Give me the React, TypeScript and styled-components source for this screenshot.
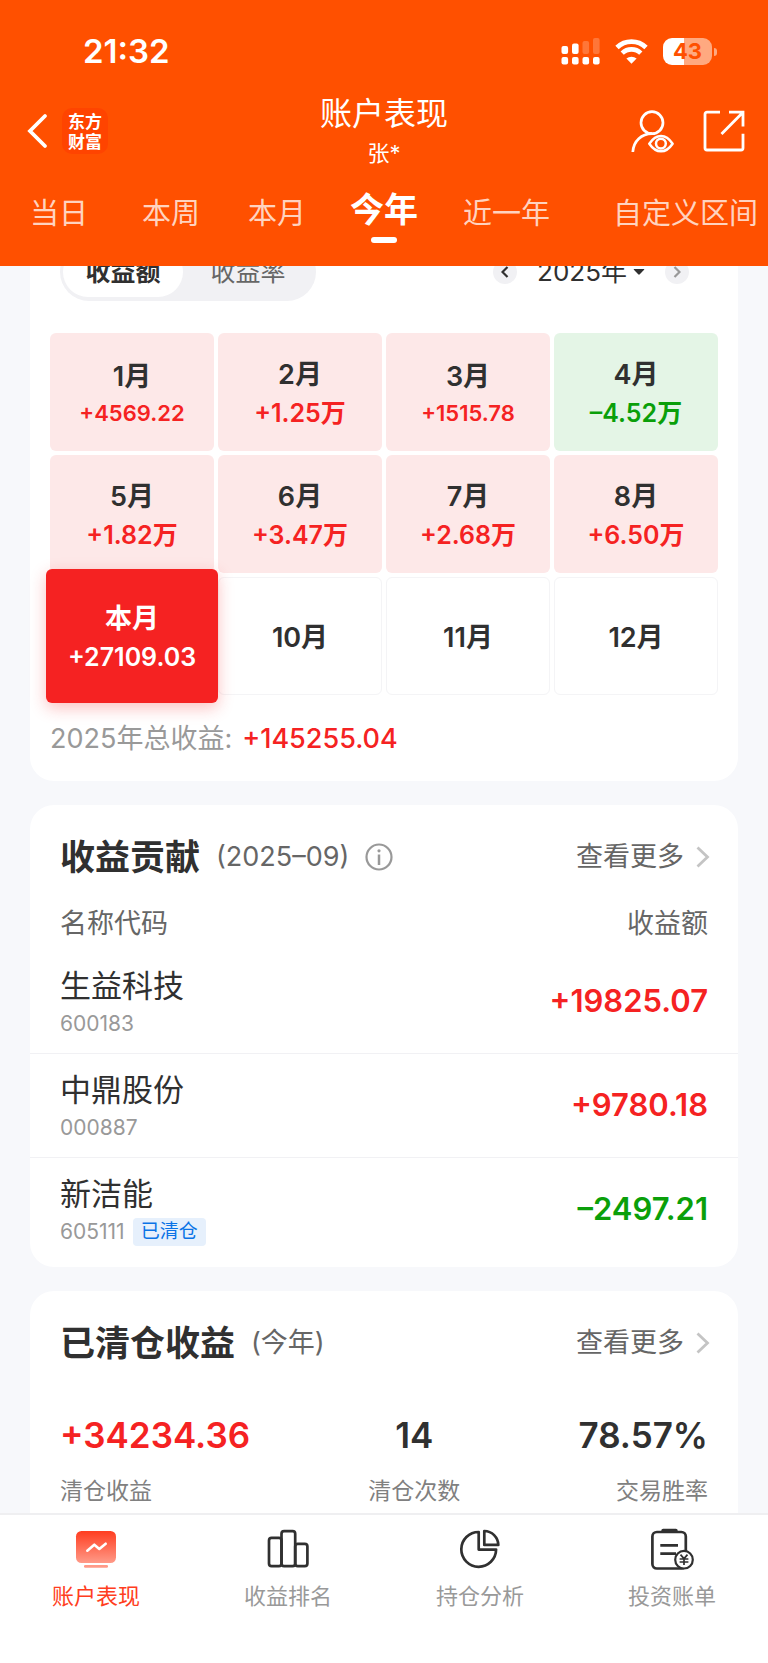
import React, { useLayoutEffect, useRef } from "react";
import styled, { createGlobalStyle, css } from "styled-components";

const GlobalStyle = createGlobalStyle`
  *, *::before, *::after { box-sizing: border-box; }
  body {
    margin: 0;
    background: #f7f8fb;
    color: #303030;
    font-family: Inter, "Noto Sans CJK SC", sans-serif;
    font-weight: 400;
  }
  button {
    padding: 0;
    border: 0;
    background: none;
    color: inherit;
    font: inherit;
    cursor: pointer;
  }
  a { color: inherit; text-decoration: none; }
  h1, h2, p, dl, dd { margin: 0; }
  svg { display: block; flex: none; }
`;

const palette = {
  brand: "#ff5000",
  up: "#f52222",
  down: "#0a9f0a",
  ink: "#303030",
  mid: "#666666",
  soft: "#999999",
};

type Trend = "up" | "down" | "none";
const trendColor = (t: Trend) =>
  t === "up" ? palette.up : t === "down" ? palette.down : palette.ink;

const Screen = styled.div`
  display: flex;
  flex-direction: column;
  height: 100vh;
`;

/* ---------- header ---------- */

const Header = styled.header`
  flex: none;
  background: ${palette.brand};
  color: #fff;
`;

const StatusBar = styled.div`
  display: flex;
  align-items: center;
  justify-content: space-between;
  padding: 31px 56px 23px 83px;
`;

const Clock = styled.span`
  font-size: 33px;
  line-height: 40px;
  font-weight: 600;
`;

const StatusIcons = styled.div`
  display: flex;
  align-items: center;
  gap: 15px;
`;

const Battery = styled.div`
  position: relative;
  width: 49px;
  height: 27px;
  border-radius: 9px;
  background: linear-gradient(90deg, #fff 43%, #ffa980 43%);
  color: ${palette.brand};
  font-size: 22px;
  line-height: 27px;
  font-weight: 700;
  text-align: center;

  &::after {
    content: "";
    position: absolute;
    right: -5px;
    top: 10px;
    width: 3px;
    height: 8px;
    border-radius: 0 3px 3px 0;
    background: #ffa980;
  }
`;

const TitleBar = styled.div`
  display: grid;
  grid-template-columns: 1fr auto 1fr;
  align-items: center;
  padding: 0 22px;
`;

const BrandGroup = styled.div`
  display: flex;
  align-items: center;
  gap: 14px;
  padding: 0 0 4px 4px;
`;

const Logo = styled.span`
  display: flex;
  align-items: center;
  justify-content: center;
  width: 46px;
  height: 46px;
  border-radius: 10px;
  background: #ff4400;
  font-family: "Noto Sans CJK SC", sans-serif;
  font-size: 17px;
  line-height: 20px;
  font-weight: 700;
  text-align: center;
`;

const TitleBlock = styled.div`
  text-align: center;
`;

const Title = styled.h1`
  font-size: 32px;
  line-height: 40px;
  font-weight: 400;
`;

const Subtitle = styled.p`
  font-size: 22px;
  line-height: 38px;
`;

const HeaderActions = styled.div`
  display: flex;
  justify-content: flex-end;
  gap: 28px;
  padding-bottom: 4px;
`;

const Tabs = styled.nav`
  display: grid;
  grid-template-columns: 118fr 106fr 106fr 108fr 137fr 183fr;
  align-items: start;
  height: 94px;
  padding: 14px 10px 0 0;
`;

const Tab = styled.button<{ $active?: boolean }>`
  display: flex;
  flex-direction: column;
  align-items: center;
  padding-top: 4px;
  font-size: 29px;
  line-height: 48px;
  font-weight: 400;
  color: rgba(255, 255, 255, 0.76);
  white-space: nowrap;

  &:last-child {
    justify-self: end;
  }

  ${(p) =>
    p.$active &&
    css`
      padding-top: 0;
      font-size: 34px;
      font-weight: 700;
      color: #fff;

      &::after {
        content: "";
        width: 26px;
        height: 6px;
        margin-top: 3px;
        border-radius: 3px;
        background: #fff;
      }
    `}
`;

/* ---------- content ---------- */

const Scroller = styled.main`
  flex: 1;
  min-height: 0;
  overflow-y: auto;
  scrollbar-width: none;
`;

const CardStack = styled.div`
  display: flex;
  flex-direction: column;
  gap: 24px;
  padding: 0 30px 24px;
`;

const Card = styled.section`
  border-radius: 24px;
  background: #fff;
`;

const CalendarToolbar = styled.div`
  display: flex;
  align-items: center;
  justify-content: space-between;
  padding: 24px 49px 32px 30px;
`;

const Segmented = styled.div`
  display: flex;
  height: 58px;
  padding: 4px 3px;
  border-radius: 29px;
  background: #f1f1f4;
`;

const Segment = styled.button<{ $active?: boolean }>`
  width: ${(p) => (p.$active ? 120 : 130)}px;
  border-radius: 25px;
  background: ${(p) => (p.$active ? "#fff" : "transparent")};
  color: ${(p) => (p.$active ? palette.ink : palette.mid)};
  font-size: 25px;
  line-height: 50px;
  font-weight: ${(p) => (p.$active ? 600 : 400)};
`;

const YearPicker = styled.div`
  display: flex;
  align-items: center;
  gap: 20px;
`;

const RoundButton = styled.button`
  display: flex;
  align-items: center;
  justify-content: center;
  width: 24px;
  height: 24px;
  border-radius: 50%;
  background: #f1f1f4;
`;

const YearButton = styled.button`
  display: flex;
  align-items: center;
  gap: 6px;
  font-size: 26px;
  line-height: 40px;
`;

const MonthGrid = styled.div`
  display: grid;
  grid-template-columns: repeat(4, 1fr);
  grid-auto-rows: 118px;
  gap: 4px;
  padding: 0 20px;
`;

type CellTone = Trend | "current";

const cellTone = {
  up: css`
    background: #fde8e8;
  `,
  down: css`
    background: #e4f5e6;
  `,
  none: css`
    border: 1px solid #f4f4f6;
  `,
  current: css`
    z-index: 1;
    margin: -8px -4px;
    background: ${palette.up};
    color: #fff;
    box-shadow: 0 5px 16px rgba(245, 34, 34, 0.28);
  `,
};

const MonthCell = styled.button<{ $tone: CellTone }>`
  display: flex;
  flex-direction: column;
  align-items: center;
  justify-content: center;
  padding-top: 3px;
  border-radius: 6px;
  ${(p) => cellTone[p.$tone]}
`;

const MonthName = styled.span`
  font-size: 27px;
  line-height: 38px;
  font-weight: 600;
`;

const MonthValue = styled.span<{ $tone: CellTone; $small?: boolean }>`
  font-size: ${(p) => (p.$small ? 22 : 25)}px;
  line-height: ${(p) => (p.$small ? 34 : 38)}px;
  font-weight: 600;
  color: ${(p) => (p.$tone === "current" ? "#fff" : trendColor(p.$tone))};
`;

const YearTotal = styled.p`
  padding: 24px 20px 22px;
  font-size: 27px;
  line-height: 40px;
  color: ${palette.soft};

  strong {
    margin-left: 10px;
    font-weight: 500;
    color: ${palette.up};
  }
`;

const CardHead = styled.div`
  display: flex;
  align-items: center;
  padding: 28px 28px 0 30px;
  line-height: 48px;
`;

const CardTitle = styled.h2`
  font-size: 35px;
  font-weight: 700;
`;

const CardNote = styled.span`
  margin: 0 16px;
  font-size: 27px;
  color: ${palette.mid};
`;

const MoreLink = styled.a`
  display: flex;
  align-items: center;
  gap: 12px;
  margin-left: auto;
  font-size: 27px;
  color: ${palette.mid};
`;

const HoldingTable = styled.table`
  width: 100%;
  margin-top: 18px;
  border-collapse: collapse;

  th {
    padding: 0 30px;
    font-size: 27px;
    line-height: 50px;
    font-weight: 400;
    text-align: left;
    color: ${palette.mid};
  }

  td {
    height: 104px;
    padding: 0 30px;
  }

  th:last-child,
  td:last-child {
    text-align: right;
  }

  tbody tr + tr td {
    border-top: 1px solid #f1f1f4;
  }
`;

const TableCard = styled(Card)`
  padding-bottom: 6px;
`;

const StockName = styled.div`
  padding-top: 8px;
  font-size: 31px;
  line-height: 38px;
`;

const StockCode = styled.div`
  display: flex;
  align-items: center;
  gap: 8px;
  font-size: 21px;
  line-height: 38px;
  color: ${palette.soft};
`;

const ClosedTag = styled.span`
  padding: 0 8px;
  border-radius: 4px;
  background: #e6f0fc;
  font-size: 19px;
  line-height: 28px;
  color: #0a73e6;
`;

const Amount = styled.span<{ $trend: Trend }>`
  font-size: 31px;
  line-height: 38px;
  font-weight: 600;
  color: ${(p) => trendColor(p.$trend)};
`;

const Stats = styled.dl`
  display: flex;
  justify-content: space-between;
  padding: 44px 30px 30px;
`;

const Stat = styled.div<{ $align: "flex-start" | "center" | "flex-end" }>`
  display: flex;
  flex-direction: column-reverse;
  align-items: ${(p) => p.$align};
  gap: 13px;
`;

const StatLabel = styled.dt`
  font-size: 23px;
  line-height: 38px;
  color: #808080;
`;

const StatValue = styled.dd<{ $trend: Trend }>`
  font-size: 35px;
  line-height: 48px;
  font-weight: 600;
  color: ${(p) => trendColor(p.$trend)};
`;

/* ---------- bottom navigation ---------- */

const BottomNav = styled.nav`
  flex: none;
  display: grid;
  grid-template-columns: repeat(4, 1fr);
  padding: 13px 0 51px;
  border-top: 2px solid #efeff1;
  background: #fff;
`;

const NavItem = styled.a<{ $active?: boolean }>`
  display: flex;
  flex-direction: column;
  align-items: center;
  gap: 8px;
  font-size: 22px;
  line-height: 32px;
  color: ${(p) => (p.$active ? "#ff3d20" : palette.soft)};
`;

/* ---------- icons ---------- */

const SignalIcon = () => (
  <svg width="39" height="28" viewBox="0 0 39 28" fill="#fff" aria-hidden="true">
    <rect x="0.5" y="9" width="6.6" height="8" rx="2" />
    <rect x="11" y="6.5" width="6.6" height="10.5" rx="2" />
    <rect x="21.5" y="4" width="6.6" height="13" rx="2" opacity="0.22" />
    <rect x="32" y="1" width="6.6" height="16" rx="2" opacity="0.22" />
    <rect x="0.5" y="20" width="6.6" height="7.6" rx="2" />
    <rect x="11" y="20" width="6.6" height="7.6" rx="2" />
    <rect x="21.5" y="20" width="6.6" height="7.6" rx="2" />
    <rect x="32" y="20" width="6.6" height="7.6" rx="2" />
  </svg>
);

const WifiIcon = () => (
  <svg width="33" height="25" viewBox="0 0 33 25" fill="none" aria-hidden="true">
    <path d="M2 8.4a21 21 0 0 1 29 0" stroke="#fff" strokeWidth="4.8" />
    <path d="M7.2 14.2a13.3 13.3 0 0 1 18.6 0" stroke="#fff" strokeWidth="4.6" />
    <path d="M11.4 19.6a7.6 7.6 0 0 1 10.2 0l-5.100 5.200z" fill="#fff" />
  </svg>
);

const BackIcon = () => (
  <svg width="22" height="36" viewBox="0 0 22 36" fill="none" aria-hidden="true">
    <path d="M19 3 4 18l15 15" stroke="#fff" strokeWidth="3.8" strokeLinecap="round" />
  </svg>
);

const ViewerIcon = () => (
  <svg width="44" height="44" viewBox="0 0 44 44" fill="none" stroke="#fff" strokeWidth="2.7" aria-hidden="true">
    <circle cx="22" cy="13.7" r="11" />
    <path d="M2.8 43C3.5 32 11.5 24.8 22 24.7" />
    <path d="M19.300 34.700Q24.500 27 31 27t11.600 7.700Q37.500 42.300 31 42.300t-11.700-7.600Z" strokeWidth="2.5" strokeLinejoin="round" />
    <circle cx="30.900" cy="34.600" r="4.900" strokeWidth="2.5" />
  </svg>
);

const ShareIcon = () => (
  <svg width="44" height="44" viewBox="0 0 44 44" fill="none" stroke="#fff" strokeWidth="2.8" aria-hidden="true">
    <path d="M18 3.200H5a2 2 0 0 0-2 2V39a2 2 0 0 0 2 2h34a2 2 0 0 0 2-2V24.800" />
    <path d="M27 3.200h14v14.200M41 3.200 19.500 25" />
  </svg>
);

const SmallArrow = ({ dir, color }: { dir: "left" | "right"; color: string }) => (
  <svg width="8" height="12" viewBox="0 0 8 12" fill="none" stroke={color} strokeWidth="2.2" aria-hidden="true">
    <path d={dir === "left" ? "M6.500 1 1.500 6l5 5" : "M1.500 1l5 5-5 5"} />
  </svg>
);

const CaretIcon = () => (
  <svg width="12" height="8" viewBox="0 0 12 8" fill={palette.ink} aria-hidden="true">
    <path d="M1.200 1h9.600q1 0 .3.800L6.800 6.300q-.8.800-1.600 0L.9 1.800Q.2 1 1.200 1z" />
  </svg>
);

const MoreArrow = () => (
  <svg width="14" height="22" viewBox="0 0 14 22" fill="none" aria-hidden="true">
    <path d="M1.500 1.500 11.500 11l-10 9.500" stroke="#c4c4c4" strokeWidth="2.800" />
  </svg>
);

const InfoIcon = () => (
  <svg width="28" height="28" viewBox="0 0 28 28" fill="none" stroke={palette.soft} strokeWidth="2.2" aria-hidden="true">
    <circle cx="14" cy="14" r="12.500" />
    <path d="M14 11.500v10.500" strokeWidth="2.500" />
    <circle cx="14" cy="7.800" r="1.600" fill={palette.soft} stroke="none" />
  </svg>
);

const PerformanceIcon = () => (
  <svg width="44" height="44" viewBox="0 0 44 44" fill="none" aria-hidden="true">
    <defs>
      <linearGradient id="screenFill" x1="0" y1="0" x2="0" y2="1">
        <stop offset="0" stopColor="#ff3d20" />
        <stop offset="1" stopColor="#ff9a88" />
      </linearGradient>
    </defs>
    <rect x="2" y="3" width="40" height="32" rx="5.500" fill="url(#screenFill)" />
    <rect x="10" y="37" width="24" height="2.700" rx="1.300" fill="#ff9a88" />
    <path d="m13.300 22.700 7-6 5 4.200 6.400-5.200" stroke="#fff" strokeWidth="2.600" strokeLinecap="round" strokeLinejoin="round" />
  </svg>
);

const RankingIcon = () => (
  <svg width="44" height="44" viewBox="0 0 44 44" fill="none" stroke={palette.ink} strokeWidth="2.700" aria-hidden="true">
    <rect x="3" y="9.800" width="12.500" height="28.300" rx="2.600" />
    <rect x="15.500" y="3.200" width="13.700" height="34.900" rx="2.600" />
    <rect x="29.200" y="15.900" width="12.200" height="22.200" rx="2.600" />
  </svg>
);

const AnalysisIcon = () => (
  <svg width="44" height="44" viewBox="0 0 44 44" fill="none" stroke={palette.ink} strokeWidth="2.700" strokeLinejoin="round" aria-hidden="true">
    <path d="M20.700 4A17.400 17.400 0 1 0 38.100 21.600H20.700Z" />
    <path d="M26.300 3V16.900H40.300A14.200 14.200 0 0 0 26.300 3Z" />
  </svg>
);

const BillIcon = () => (
  <svg width="44" height="44" viewBox="0 0 44 44" fill="none" stroke={palette.ink} strokeWidth="2.700" aria-hidden="true">
    <rect x="2.400" y="4" width="33.400" height="36.500" rx="4.500" />
    <rect x="11.300" y="0.800" width="16.400" height="4" rx="1.800" fill={palette.ink} stroke="none" />
    <path d="M10.300 17.300H28M10.300 25.600H26" />
    <circle cx="34" cy="31.700" r="8.800" fill="#fff" strokeWidth="2.200" />
    <path d="m30.500 26.600 3.500 4 3.500-4M34 30.600v6.400M29.600 31h8.800M29.600 34h8.800" strokeWidth="1.700" />
  </svg>
);

/* ---------- data ---------- */

const tabs = ["当日", "本周", "本月", "今年", "近一年", "自定义区间"];

const months: { name: string; value?: string; tone: CellTone; small?: boolean }[] = [
  { name: "1月", value: "+4569.22", tone: "up", small: true },
  { name: "2月", value: "+1.25万", tone: "up" },
  { name: "3月", value: "+1515.78", tone: "up", small: true },
  { name: "4月", value: "–4.52万", tone: "down" },
  { name: "5月", value: "+1.82万", tone: "up" },
  { name: "6月", value: "+3.47万", tone: "up" },
  { name: "7月", value: "+2.68万", tone: "up" },
  { name: "8月", value: "+6.50万", tone: "up" },
  { name: "本月", value: "+27109.03", tone: "current" },
  { name: "10月", tone: "none" },
  { name: "11月", tone: "none" },
  { name: "12月", tone: "none" },
];

const holdings: { name: string; code: string; amount: string; trend: Trend; closed?: boolean }[] = [
  { name: "生益科技", code: "600183", amount: "+19825.07", trend: "up" },
  { name: "中鼎股份", code: "000887", amount: "+9780.18", trend: "up" },
  { name: "新洁能", code: "605111", amount: "–2497.21", trend: "down", closed: true },
];

const navItems = [
  { label: "账户表现", Icon: PerformanceIcon },
  { label: "收益排名", Icon: RankingIcon },
  { label: "持仓分析", Icon: AnalysisIcon },
  { label: "投资账单", Icon: BillIcon },
];

/* The list opens part-way down, with the toolbar tucked under the header. */
const INITIAL_SCROLL = 47;

export default function App() {
  const scroller = useRef<HTMLElement>(null);

  useLayoutEffect(() => {
    if (scroller.current) scroller.current.scrollTop = INITIAL_SCROLL;
  }, []);

  return (
    <Screen lang="zh-CN">
      <GlobalStyle />
      <Header>
        <StatusBar>
          <Clock>21:32</Clock>
          <StatusIcons>
            <SignalIcon />
            <WifiIcon />
            <Battery>43</Battery>
          </StatusIcons>
        </StatusBar>
        <TitleBar>
          <BrandGroup>
            <button aria-label="返回">
              <BackIcon />
            </button>
            <Logo>
              东方
              <br />
              财富
            </Logo>
          </BrandGroup>
          <TitleBlock>
            <Title>账户表现</Title>
            <Subtitle>张*</Subtitle>
          </TitleBlock>
          <HeaderActions>
            <button aria-label="查看账户">
              <ViewerIcon />
            </button>
            <button aria-label="分享">
              <ShareIcon />
            </button>
          </HeaderActions>
        </TitleBar>
        <Tabs>
          {tabs.map((t) => (
            <Tab key={t} $active={t === "今年"}>
              {t}
            </Tab>
          ))}
        </Tabs>
      </Header>

      <Scroller ref={scroller}>
        <CardStack>
          <Card>
            <CalendarToolbar>
              <Segmented>
                <Segment $active>收益额</Segment>
                <Segment>收益率</Segment>
              </Segmented>
              <YearPicker>
                <RoundButton aria-label="上一年">
                  <SmallArrow dir="left" color={palette.ink} />
                </RoundButton>
                <YearButton>
                  2025年
                  <CaretIcon />
                </YearButton>
                <RoundButton aria-label="下一年">
                  <SmallArrow dir="right" color={palette.soft} />
                </RoundButton>
              </YearPicker>
            </CalendarToolbar>
            <MonthGrid>
              {months.map((m) => (
                <MonthCell key={m.name} $tone={m.tone}>
                  <MonthName>{m.name}</MonthName>
                  {m.value && (
                    <MonthValue $tone={m.tone} $small={m.small}>
                      {m.value}
                    </MonthValue>
                  )}
                </MonthCell>
              ))}
            </MonthGrid>
            <YearTotal>
              2025年总收益:<strong>+145255.04</strong>
            </YearTotal>
          </Card>

          <TableCard>
            <CardHead>
              <CardTitle>收益贡献</CardTitle>
              <CardNote>(2025–09)</CardNote>
              <button aria-label="说明">
                <InfoIcon />
              </button>
              <MoreLink href="#contribution">
                查看更多
                <MoreArrow />
              </MoreLink>
            </CardHead>
            <HoldingTable>
              <thead>
                <tr>
                  <th scope="col">名称代码</th>
                  <th scope="col">收益额</th>
                </tr>
              </thead>
              <tbody>
                {holdings.map((h) => (
                  <tr key={h.code}>
                    <td>
                      <StockName>{h.name}</StockName>
                      <StockCode>
                        {h.code}
                        {h.closed && <ClosedTag>已清仓</ClosedTag>}
                      </StockCode>
                    </td>
                    <td>
                      <Amount $trend={h.trend}>{h.amount}</Amount>
                    </td>
                  </tr>
                ))}
              </tbody>
            </HoldingTable>
          </TableCard>

          <Card>
            <CardHead>
              <CardTitle>已清仓收益</CardTitle>
              <CardNote>(今年)</CardNote>
              <MoreLink href="#closed">
                查看更多
                <MoreArrow />
              </MoreLink>
            </CardHead>
            <Stats>
              <Stat $align="flex-start">
                <StatLabel>清仓收益</StatLabel>
                <StatValue $trend="up">+34234.36</StatValue>
              </Stat>
              <Stat $align="center">
                <StatLabel>清仓次数</StatLabel>
                <StatValue $trend="none">14</StatValue>
              </Stat>
              <Stat $align="flex-end">
                <StatLabel>交易胜率</StatLabel>
                <StatValue $trend="none">78.57%</StatValue>
              </Stat>
            </Stats>
          </Card>
        </CardStack>
      </Scroller>

      <BottomNav>
        {navItems.map(({ label, Icon }, i) => (
          <NavItem key={label} href={`#tab-${i}`} $active={i === 0}>
            <Icon />
            {label}
          </NavItem>
        ))}
      </BottomNav>
    </Screen>
  );
}
